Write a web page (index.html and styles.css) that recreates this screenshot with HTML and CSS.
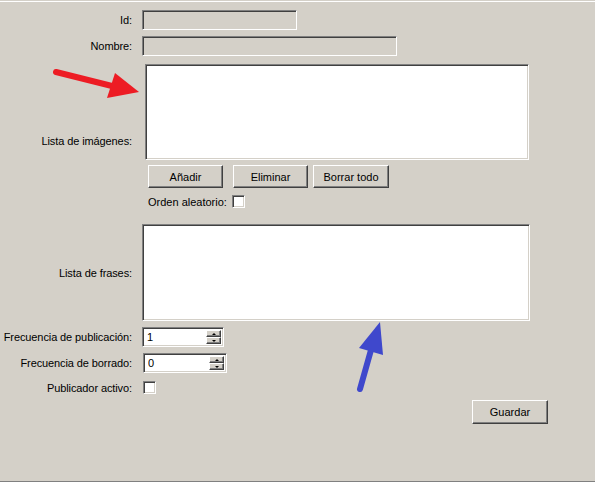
FILE: index.html
```html
<!DOCTYPE html>
<html lang="es">
<head>
    <meta charset="UTF-8">
    <title>Publicador</title>
    <link rel="stylesheet" href="styles.css">
</head>
<body>
    <div class="window">
        <form class="form">
            <label class="label row-id">Id:</label>
            <input class="field sunken disabled id-field row-id" type="text" disabled>

            <label class="label row-name">Nombre:</label>
            <input class="field sunken disabled name-field row-name" type="text" disabled>

            <label class="label label-bottom row-images">Lista de imágenes:</label>
            <textarea class="sunken list images-list row-images"></textarea>

            <div class="buttons">
                <button type="button" class="btn btn-add">Añadir</button>
                <button type="button" class="btn btn-remove">Eliminar</button>
                <button type="button" class="btn btn-clear">Borrar todo</button>
            </div>

            <div class="random">
                <span>Orden aleatorio:</span>
                <span class="check sunken"></span>
            </div>

            <label class="label row-phrases">Lista de frases:</label>
            <textarea class="sunken list phrases-list row-phrases"></textarea>

            <label class="label row-spin">Frecuencia de publicación:</label>
            <div class="spinner sunken spin-pub row-spin">
                <input class="spin-value" type="text" value="1">
                <div class="spin-btns">
                    <span class="spin-btn"><i class="tri-up"></i></span>
                    <span class="spin-btn"><i class="tri-down"></i></span>
                </div>
            </div>

            <label class="label row-spin">Frecuencia de borrado:</label>
            <div class="spinner sunken spin-del row-spin">
                <input class="spin-value" type="text" value="0">
                <div class="spin-btns">
                    <span class="spin-btn"><i class="tri-up"></i></span>
                    <span class="spin-btn"><i class="tri-down"></i></span>
                </div>
            </div>

            <label class="label row-active">Publicador activo:</label>
            <span class="check sunken check-active row-active"></span>

            <div class="save-row">
                <button type="button" class="btn btn-save">Guardar</button>
            </div>
        </form>

        <!-- annotation arrows -->
        <svg class="arrows" width="595" height="482" viewBox="0 0 595 482">
            <line x1="56" y1="72" x2="112" y2="86" stroke="#ed1c24" stroke-width="6" stroke-linecap="round"/>
            <polygon points="139,92 107,98 115,73" fill="#ed1c24"/>
            <line x1="360" y1="389" x2="371" y2="350" stroke="#3f48cc" stroke-width="6" stroke-linecap="round"/>
            <polygon points="380,322 359,348 383,355" fill="#3f48cc"/>
        </svg>
    </div>
</body>
</html>
```

FILE: styles.css
```css
body {
    margin: 0;
    background-color: #d4d0c8;
    font-family: "Liberation Sans", Arial, sans-serif;
    font-size: 11px;
    color: #000;
}
.window {
    position: relative;
    height: 479px;
    margin-top: 1px;
    border-top: 1px solid #fff;
    border-bottom: 1px solid #808080;
    overflow: hidden;
}
.form {
    display: grid;
    grid-template-columns: 132px 1fr;
    column-gap: 10px;
    align-items: center;
}
.label {
    grid-column: 1;
    text-align: right;
    white-space: nowrap;
    letter-spacing: -0.1px;
}
.label-bottom {
    align-self: end;
    margin-bottom: 13px;
}
.row-id { margin-top: 8px; }
.row-name { margin-top: 6px; }
.row-images { margin-top: 8px; }
.row-phrases { margin-top: 16px; }
.row-spin { margin-top: 6px; }
.row-active { margin-top: 8px; }
.sunken {
    box-sizing: border-box;
    border: 1px solid;
    border-color: #808080 #fff #fff #808080;
    box-shadow: inset 1px 1px #404040, inset -1px -1px #d4d0c8;
    background-color: #fff;
}
.field, .list {
    grid-column: 2;
    font: inherit;
    padding: 2px 4px;
    outline: none;
    resize: none;
}
.disabled {
    background-color: #d4d0c8;
}
.id-field {
    width: 155px;
    height: 20px;
}
.name-field {
    width: 255px;
    height: 20px;
}
.images-list {
    width: 384px;
    height: 96px;
    margin-left: 3px;
}
.buttons {
    grid-column: 2;
    display: flex;
    margin-top: 5px;
    margin-left: 6px;
}
.btn {
    box-sizing: border-box;
    height: 23px;
    padding: 0;
    font: inherit;
    color: #000;
    background-color: #d4d0c8;
    border: 1px solid;
    border-color: #fff #404040 #404040 #fff;
    box-shadow: inset -1px -1px #808080;
}
.btn-add {
    width: 75px;
}
.btn-remove {
    width: 75px;
    margin-left: 10px;
}
.btn-clear {
    width: 76px;
    margin-left: 5px;
}
.random {
    grid-column: 2;
    display: flex;
    align-items: center;
    margin-top: 7px;
    margin-left: 6px;
    height: 13px;
}
.random .check {
    margin-left: 5px;
}
.check {
    display: inline-block;
    width: 13px;
    height: 13px;
}
.phrases-list {
    width: 388px;
    height: 97px;
}
.spinner {
    grid-column: 2;
    display: flex;
    height: 20px;
    padding: 2px;
}
.spin-pub {
    width: 82px;
}
.spin-del {
    width: 84px;
    margin-left: 1px;
}
.spin-value {
    flex: 1;
    min-width: 0;
    border: none;
    outline: none;
    padding: 0 0 0 2px;
    font: inherit;
    background: transparent;
}
.spin-btns {
    display: flex;
    flex-direction: column;
    width: 15px;
}
.spin-btn {
    box-sizing: border-box;
    flex: 1;
    display: flex;
    align-items: center;
    justify-content: center;
    background-color: #d4d0c8;
    border: 1px solid;
    border-color: #fff #404040 #404040 #fff;
    box-shadow: inset -1px -1px #808080;
}
.tri-up, .tri-down {
    width: 0;
    height: 0;
    border-left: 2px solid transparent;
    border-right: 2px solid transparent;
}
.tri-up {
    border-bottom: 2px solid #000;
}
.tri-down {
    border-top: 2px solid #000;
}
.check-active {
    grid-column: 2;
    margin-left: 1px;
}
.save-row {
    grid-column: 1 / 3;
    margin-top: 6px;
    padding-left: 472px;
}
.btn-save {
    width: 76px;
    height: 24px;
}
.arrows {
    position: absolute;
    top: -2px;
    left: 0;
    pointer-events: none;
}
```
